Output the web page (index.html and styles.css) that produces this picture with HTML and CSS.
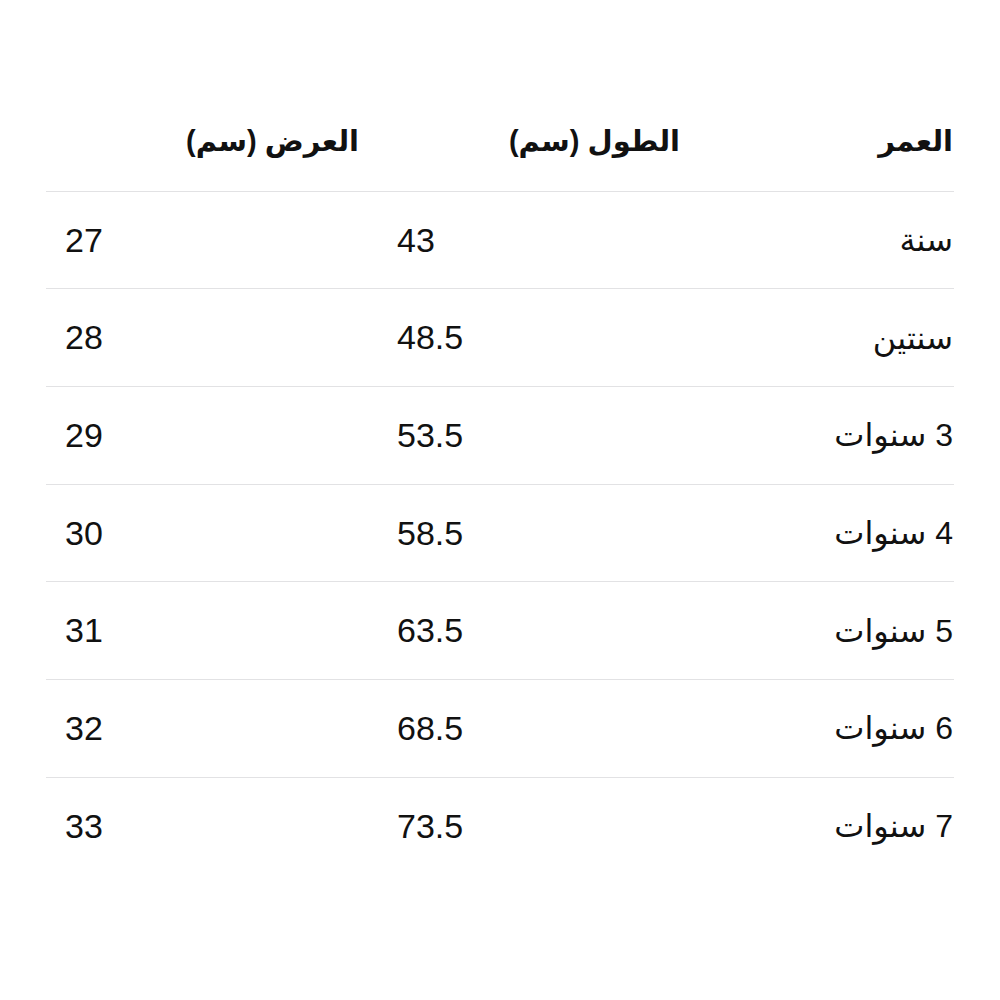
FILE: index.html
```html
<!DOCTYPE html>
<html lang="ar" dir="rtl">
<head>
<meta charset="utf-8">
<link rel="stylesheet" href="styles.css">
</head>
<body>
<div class="table">
  <div class="row head">
    <div class="cell c1">العمر</div>
    <div class="cell c2">الطول (سم)</div>
    <div class="cell c3">العرض (سم)</div>
  </div>
  <div class="row"><div class="cell c1">سنة</div><div class="cell c2 num">43</div><div class="cell c3 num">27</div></div>
  <div class="row"><div class="cell c1">سنتين</div><div class="cell c2 num">48.5</div><div class="cell c3 num">28</div></div>
  <div class="row"><div class="cell c1">3 سنوات</div><div class="cell c2 num">53.5</div><div class="cell c3 num">29</div></div>
  <div class="row"><div class="cell c1">4 سنوات</div><div class="cell c2 num">58.5</div><div class="cell c3 num">30</div></div>
  <div class="row"><div class="cell c1">5 سنوات</div><div class="cell c2 num">63.5</div><div class="cell c3 num">31</div></div>
  <div class="row"><div class="cell c1">6 سنوات</div><div class="cell c2 num">68.5</div><div class="cell c3 num">32</div></div>
  <div class="row last"><div class="cell c1">7 سنوات</div><div class="cell c2 num">73.5</div><div class="cell c3 num">33</div></div>
</div>
</body>
</html>
```
FILE: styles.css
```css
html, body {
  margin: 0;
  padding: 0;
  background: #ffffff;
}
body {
  font-family: "Liberation Sans", "DejaVu Sans", sans-serif;
  color: #111111;
}
.table {
  width: 908px;
  margin: 94px 46px 0 46px;
}
.row {
  display: grid;
  grid-template-columns: 255px 321px 332px;
  height: 96.7px;
  align-items: center;
  border-bottom: 1px solid #e2e2e4;
}
.row.last {
  border-bottom: none;
}
.cell {
  font-size: 32px;
  text-align: right;
  white-space: nowrap;
}
.head .cell {
  font-size: 29px;
  font-weight: bold;
  padding-bottom: 2px;
}
.c1 {
  padding-right: 1px;
}
.c2, .c3 {
  padding-left: 19px;
  padding-right: 19px;
}
.num {
  direction: ltr;
  text-align: left;
  font-size: 34px;
}
```
